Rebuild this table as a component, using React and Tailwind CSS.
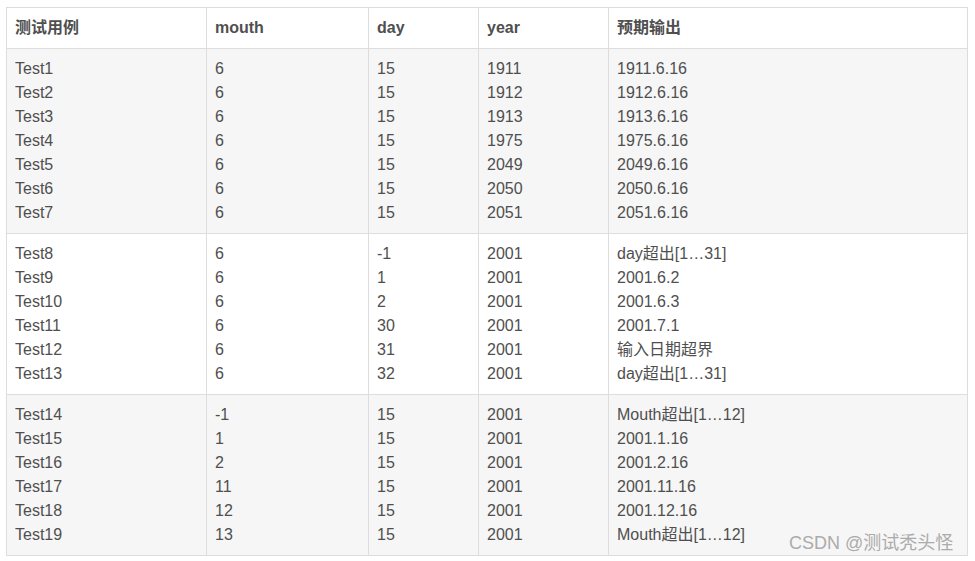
import React from "react";

const groups = [
  {
    bg: "bg-[#f6f6f6]",
    rows: [
      ["Test1", "6", "15", "1911", "1911.6.16"],
      ["Test2", "6", "15", "1912", "1912.6.16"],
      ["Test3", "6", "15", "1913", "1913.6.16"],
      ["Test4", "6", "15", "1975", "1975.6.16"],
      ["Test5", "6", "15", "2049", "2049.6.16"],
      ["Test6", "6", "15", "2050", "2050.6.16"],
      ["Test7", "6", "15", "2051", "2051.6.16"],
    ],
  },
  {
    bg: "bg-white",
    rows: [
      ["Test8", "6", "-1", "2001", "day超出[1…31]"],
      ["Test9", "6", "1", "2001", "2001.6.2"],
      ["Test10", "6", "2", "2001", "2001.6.3"],
      ["Test11", "6", "30", "2001", "2001.7.1"],
      ["Test12", "6", "31", "2001", "输入日期超界"],
      ["Test13", "6", "32", "2001", "day超出[1…31]"],
    ],
  },
  {
    bg: "bg-[#f6f6f6]",
    rows: [
      ["Test14", "-1", "15", "2001", "Mouth超出[1…12]"],
      ["Test15", "1", "15", "2001", "2001.1.16"],
      ["Test16", "2", "15", "2001", "2001.2.16"],
      ["Test17", "11", "15", "2001", "2001.11.16"],
      ["Test18", "12", "15", "2001", "2001.12.16"],
      ["Test19", "13", "15", "2001", "Mouth超出[1…12]"],
    ],
  },
];

const headers = ["测试用例", "mouth", "day", "year", "预期输出"];
const widths = ["w-[200px]", "w-[162px]", "w-[110px]", "w-[130px]", "w-[359px]"];

export default function App() {
  return (
    <div
      className="w-[975px] h-[561px] bg-white pt-[7px] pl-[6px] relative"
      style={{ fontFamily: '"Liberation Sans", Arial, "Noto Sans CJK SC", sans-serif' }}
    >
      <table className="border-collapse text-[16px] leading-[24px] text-[#4f4f4f] table-fixed w-[962px]">
        <thead>
          <tr className="bg-white">
            {headers.map((h, i) => (
              <th
                key={i}
                className={`${widths[i]} border border-[#dddddd] text-left font-bold px-[8px] py-[8px] align-top`}
              >
                {h}
              </th>
            ))}
          </tr>
        </thead>
        <tbody>
          {groups.map((g, gi) => (
            <tr key={gi} className={g.bg}>
              {[0, 1, 2, 3, 4].map((c) => (
                <td
                  key={c}
                  className="border border-[#dddddd] px-[8px] py-[8px] align-top"
                >
                  {g.rows.map((r, ri) => (
                    <div key={ri}>{r[c]}</div>
                  ))}
                </td>
              ))}
            </tr>
          ))}
        </tbody>
      </table>
      <div className="absolute left-[789px] top-[531px] text-[18px] leading-[24px] text-[#ababab] whitespace-nowrap">
        CSDN @测试秃头怪
      </div>
    </div>
  );
}
